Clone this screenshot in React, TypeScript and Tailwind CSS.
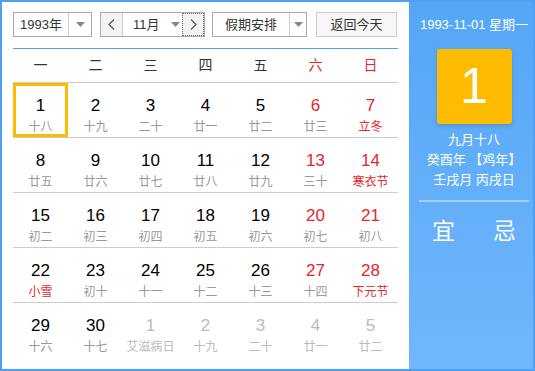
import { useState } from "react";

type Day = {
  n: number;
  lunar: string;
  red?: boolean;
  fest?: boolean;
  other?: boolean;
};

const days: Day[] = [
  { n: 1, lunar: "十八" },
  { n: 2, lunar: "十九" },
  { n: 3, lunar: "二十" },
  { n: 4, lunar: "廿一" },
  { n: 5, lunar: "廿二" },
  { n: 6, lunar: "廿三", red: true },
  { n: 7, lunar: "立冬", red: true, fest: true },
  { n: 8, lunar: "廿五" },
  { n: 9, lunar: "廿六" },
  { n: 10, lunar: "廿七" },
  { n: 11, lunar: "廿八" },
  { n: 12, lunar: "廿九" },
  { n: 13, lunar: "三十", red: true },
  { n: 14, lunar: "寒衣节", red: true, fest: true },
  { n: 15, lunar: "初二" },
  { n: 16, lunar: "初三" },
  { n: 17, lunar: "初四" },
  { n: 18, lunar: "初五" },
  { n: 19, lunar: "初六" },
  { n: 20, lunar: "初七", red: true },
  { n: 21, lunar: "初八", red: true },
  { n: 22, lunar: "小雪", fest: true },
  { n: 23, lunar: "初十" },
  { n: 24, lunar: "十一" },
  { n: 25, lunar: "十二" },
  { n: 26, lunar: "十三" },
  { n: 27, lunar: "十四", red: true },
  { n: 28, lunar: "下元节", red: true, fest: true },
  { n: 29, lunar: "十六" },
  { n: 30, lunar: "十七" },
  { n: 1, lunar: "艾滋病日", other: true },
  { n: 2, lunar: "十九", other: true },
  { n: 3, lunar: "二十", other: true },
  { n: 4, lunar: "廿一", other: true },
  { n: 5, lunar: "廿二", other: true },
];

const weekdays = ["一", "二", "三", "四", "五", "六", "日"];

function Caret() {
  return (
    <svg width="9" height="5" viewBox="0 0 9 5">
      <path d="M0 0h9L4.5 5z" fill="#888" />
    </svg>
  );
}

export default function App() {
  const [selected, setSelected] = useState(0);

  return (
    <div
      className="flex w-[535px] h-[371px] border-2 border-[#4fa0f4] bg-white text-[#333] overflow-hidden"
      style={{ fontFamily: '"Liberation Sans", "Noto Sans CJK SC", sans-serif' }}
    >
      <div className="w-[407px] px-[11px] pt-[10px] flex flex-col">
        {/* toolbar */}
        <div className="flex h-[25px] text-[13px]">
          <div className="flex w-[79px] border border-[#aaa]">
            <div className="w-[55px] flex items-center justify-center border-r border-[#ccc]">1993年</div>
            <div className="flex-1 flex items-center justify-center">
              <Caret />
            </div>
          </div>
          <div className="flex w-[105px] ml-[8px] border border-[#aaa]">
            <div className="w-[22px] flex items-center justify-center border-r border-[#ccc] bg-[#f3f3f3]">
              <svg width="7" height="11" viewBox="0 0 7 11">
                <path d="M6 0.5L1 5.5l5 5" fill="none" stroke="#555" strokeWidth="1.2" />
              </svg>
            </div>
            <div className="w-[59px] flex items-center pl-[10px] whitespace-nowrap">
              <span>11月</span>
              <span className="ml-[11px] flex">
                <Caret />
              </span>
            </div>
            <div className="flex-1 flex items-center justify-center border border-dotted border-[#666] bg-[#f3f3f3]">
              <svg width="7" height="11" viewBox="0 0 7 11">
                <path d="M1 0.5l5 5-5 5" fill="none" stroke="#555" strokeWidth="1.2" />
              </svg>
            </div>
          </div>
          <div className="flex w-[95px] ml-[7px] border border-[#aaa]">
            <div className="w-[77px] flex items-center justify-center border-r border-[#ccc] whitespace-nowrap">假期安排</div>
            <div className="flex-1 flex items-center justify-center">
              <Caret />
            </div>
          </div>
          <div className="w-[81px] ml-[9px] border border-[#ccc] bg-[#f7f7f7] flex items-center justify-center whitespace-nowrap">
            返回今天
          </div>
        </div>

        <div className="h-px bg-[#4fa0f4] mt-[11px]" />

        <div className="grid grid-cols-7 h-[33px] items-center text-[14px]">
          {weekdays.map((w, i) => (
            <div key={w} className={`text-center ${i > 4 ? "text-[#e5262b]" : "text-[#333]"}`}>
              {w}
            </div>
          ))}
        </div>

        <div className="grid grid-cols-7">
          {days.map((d, i) => {
            const numColor = d.other ? "text-[#bbb]" : d.red ? "text-[#e5262b]" : "text-black";
            const lunarColor = d.other ? "text-[#bbb]" : d.fest ? "text-[#e5262b]" : "text-[#999]";
            return (
              <div key={i} className="h-[55px] border-t border-[#ccc]" onClick={() => setSelected(i)}>
                <div
                  className={`h-full flex flex-col items-center pt-[10px] border-[3px] ${
                    selected === i ? "border-[#ffbb00]" : "border-transparent"
                  }`}
                >
                  <div className={`text-[17px] leading-[20px] ${numColor}`}>{d.n}</div>
                  <div className={`text-[12px] leading-[16px] mt-[3px] whitespace-nowrap ${lunarColor}`}>{d.lunar}</div>
                </div>
              </div>
            );
          })}
        </div>
      </div>

      <div className="flex-1 flex flex-col items-center pl-[6px] bg-gradient-to-b from-[#55a6f7] to-[#70b7fb] text-white">
        <div className="text-[13px] mt-[15px] leading-[16px] whitespace-nowrap">1993-11-01 星期一</div>
        <div className="mt-[16px] w-[75px] h-[75px] rounded-[3px] bg-[#ffbb00] flex items-center justify-center text-[50px] shadow-[0_2px_4px_rgba(0,0,0,0.15)]">
          1
        </div>
        <div className="text-[13px] leading-[20px] mt-[6px] text-center whitespace-nowrap">
          <div>九月十八</div>
          <div>癸酉年 【鸡年】</div>
          <div>壬戌月 丙戌日</div>
        </div>
        <div className="w-[110px] h-[2px] bg-white/40 mt-[10px]" />
        <div className="flex gap-[38px] text-[23px] mt-[12px]">
          <span>宜</span>
          <span>忌</span>
        </div>
      </div>
    </div>
  );
}
